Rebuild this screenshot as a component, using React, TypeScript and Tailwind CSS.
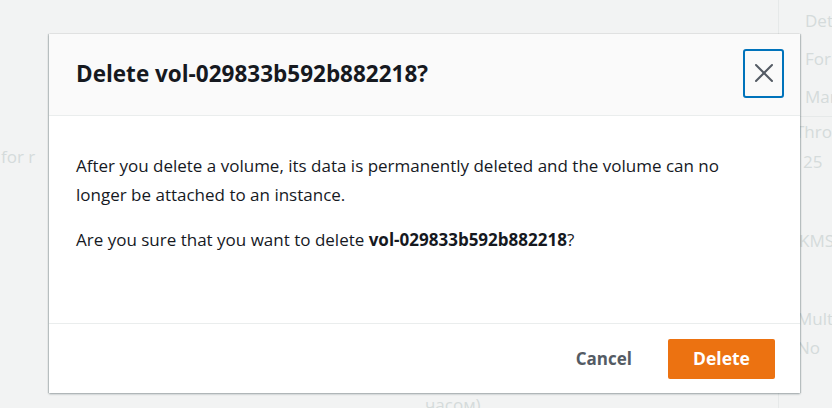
import { X } from "lucide-react";

const volumeId = "vol-029833b592b882218";

export default function App() {
  return (
    <div className="relative w-[832px] h-[408px] overflow-hidden bg-[#f2f3f3] font-['Open_Sans',sans-serif]">
      {/* Page behind the overlay */}
      <div className="flex h-full text-[17px] text-[#d5dbdb]">
        <div className="flex-1 flex flex-col">
          <div className="pt-[144px] pl-[1px]">for r</div>
          <div className="mt-auto pl-[425px] mb-[-9px]">часом)</div>
        </div>
        <div className="w-[54px] border-l border-[#e6e9e9] pl-[26px] flex flex-col">
          <div className="pt-[2px] leading-[38px]">Det</div>
          <div className="leading-[38px]">For</div>
          <div className="leading-[38px] border-b border-[#e6e9e9] -ml-[26px] pl-[26px]">Mar</div>
          <div className="leading-[30px] -ml-[10px]">Thro</div>
          <div className="leading-[30px] -ml-[2px]">25</div>
          <div className="mt-[51px] -ml-[6px]">KMS</div>
          <div className="mt-[52px] -ml-[8px]">Multi</div>
          <div className="mt-[4px] -ml-[8px]">No</div>
        </div>
      </div>

      {/* Modal */}
      <div className="absolute left-[49px] top-[34px] w-[751px] h-[359px] bg-white flex flex-col shadow-[0_1px_2px_rgba(0,28,36,0.35),1px_0_1px_rgba(0,28,36,0.15),-1px_0_1px_rgba(0,28,36,0.15)]">
        <div className="h-[82px] bg-[#fafafa] border-b border-[#eaeded] flex items-center justify-between pl-[27px] pr-[16px]">
          <h2 className="text-[22.5px] font-bold text-[#16191f] -mt-[2px]">Delete {volumeId}?</h2>
          <button className="w-[41px] h-[49px] border-2 border-[#0073bb] rounded-[3px] flex items-center justify-center text-[#545b64] -mt-[3px]">
            <X size={32} strokeWidth={1.5} />
          </button>
        </div>
        <div className="flex-1 pl-[27px] pt-[35px] text-[17px] leading-[29px] text-[#16191f]">
          <p className="max-w-[665px]">
            After you delete a volume, its data is permanently deleted and the volume can no longer be attached to an instance.
          </p>
          <p className="mt-[16px]">
            Are you sure that you want to delete <span className="font-bold">{volumeId}</span>?
          </p>
        </div>
        <div className="h-[70px] border-t border-[#eaeded] flex items-center justify-end gap-[36px] pr-[25px]">
          <button className="text-[17px] font-bold text-[#545b64]">Cancel</button>
          <button className="w-[107px] h-[40px] rounded-[2px] bg-[#ec7211] text-white text-[17.5px] font-bold">Delete</button>
        </div>
      </div>
    </div>
  );
}
